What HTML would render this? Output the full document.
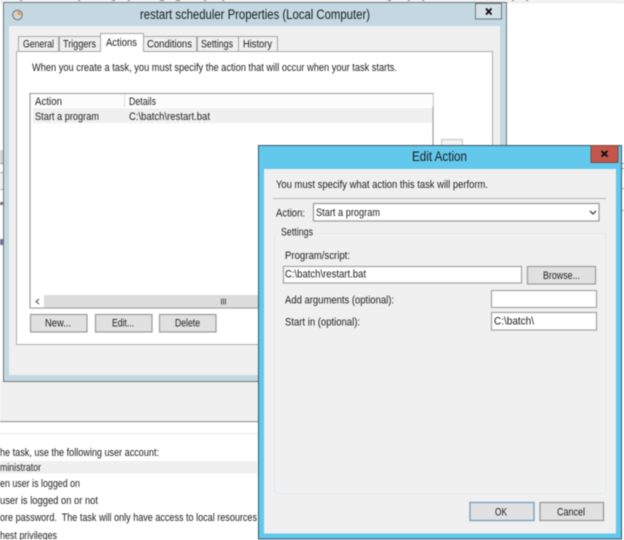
<!DOCTYPE html>
<html><head><meta charset="utf-8"><style>
html,body{margin:0;padding:0;width:624px;height:540px;overflow:hidden;background:#fff}
svg{display:block;filter:blur(.4px)}
text{font-family:"Liberation Sans",sans-serif;font-size:11px;fill:#1c1c1c}
</style></head><body>
<svg width="624" height="540" viewBox="0 0 624 540" xmlns="http://www.w3.org/2000/svg">
<rect width="624" height="540" fill="#fff"/>
<!-- top strip -->
<rect width="624" height="3.5" fill="#f0f0f0"/>
<g fill="#777"><rect x="20" y="0" width="2" height="1"/><rect x="78" y="0" width="2" height="1"/><rect x="112" y="0" width="3" height="1"/><rect x="128" y="0" width="2" height="1"/><rect x="160" y="0" width="4" height="1"/><rect x="176" y="0" width="4" height="1"/><rect x="204" y="0" width="2" height="1"/><rect x="222" y="0" width="2" height="1"/><rect x="388" y="0" width="3" height="1"/><rect x="408" y="0" width="2" height="1"/><rect x="422" y="0" width="2" height="1"/><rect x="512" y="0" width="2" height="1"/><rect x="526" y="0" width="2" height="1"/></g>
<!-- left fragments -->
<rect x="0" y="150" width="3" height="13" fill="#d4d4d4"/>
<rect x="0" y="163" width="3" height="1" fill="#999"/>
<rect x="0" y="172" width="3" height="1" fill="#aaa"/>
<rect x="0" y="173" width="3" height="16" fill="#f0f0f0"/>
<rect x="0" y="189" width="3" height="1" fill="#aaa"/>
<rect x="0" y="202" width="3" height="3" fill="#8a7068"/>
<rect x="0" y="239" width="3" height="6" fill="#70749a"/>
<!-- right fragments -->
<rect x="622" y="163" width="2" height="1" fill="#888"/><rect x="622" y="168" width="2" height="1" fill="#888"/><rect x="622" y="188" width="2" height="1" fill="#aaa"/><rect x="622" y="210" width="2" height="1" fill="#aaa"/>
<!-- lower background -->
<rect x="0" y="381" width="260" height="40" fill="#f0f0f0"/>
<rect x="0" y="421" width="260" height="1.2" fill="#9a9a9a"/>
<rect x="0" y="433" width="260" height="1" fill="#e2e8ea"/>
<rect x="0" y="461" width="257" height="12.5" fill="#f0f0f0"/>
<text x="0" y="456" textLength="159" lengthAdjust="spacingAndGlyphs">he task, use the following user account:</text>
<text x="0" y="471" textLength="41" lengthAdjust="spacingAndGlyphs">ministrator</text>
<text x="0" y="487" textLength="80" lengthAdjust="spacingAndGlyphs">en user is logged on</text>
<text x="0" y="504" textLength="98" lengthAdjust="spacingAndGlyphs">user is logged on or not</text>
<text x="0" y="521" textLength="257" lengthAdjust="spacingAndGlyphs" xml:space="preserve">ore password.  The task will only have access to local resources</text>
<text x="0" y="539" textLength="57" lengthAdjust="spacingAndGlyphs">hest privileges</text>

<!-- back window -->
<rect x="3.5" y="2.5" width="503" height="379" fill="#c3d8e0" stroke="#6d777c"/>
<rect x="9" y="26" width="491" height="349" fill="#f0f0f0"/>
<rect x="475.5" y="3.5" width="26" height="15.5" fill="#d3e1e6" stroke="#6d777c"/>
<path d="M486 8.5l5.5 6M491.5 8.5l-5.5 6" stroke="#111" stroke-width="1.9" fill="none"/>
<circle cx="17.5" cy="15" r="4.8" fill="#d2d2d2" stroke="#777" stroke-width="1"/>
<path d="M17.5 15V11.2A3.8 3.8 0 0 1 21.3 15Z" fill="#e0a050"/>
<text x="140" y="19" style="font-size:13.5px" textLength="230" lengthAdjust="spacingAndGlyphs">restart scheduler Properties (Local Computer)</text>
<!-- tabs panel -->
<rect x="16.5" y="51.5" width="476" height="293" fill="#fff" stroke="#aeaeae"/>
<g fill="#f0f0f0" stroke="#a8a8a8">
<rect x="18.5" y="36.5" width="40" height="15"/><rect x="59.5" y="36.5" width="41" height="15"/>
<rect x="143.5" y="36.5" width="53" height="15"/><rect x="197.5" y="36.5" width="41" height="15"/><rect x="238.5" y="36.5" width="39" height="15"/>
</g>
<rect x="100.5" y="33.5" width="43" height="18" fill="#fff" stroke="#a8a8a8"/>
<rect x="101" y="50" width="42" height="3" fill="#fff"/>
<text x="23" y="47.5" textLength="31" lengthAdjust="spacingAndGlyphs">General</text>
<text x="63" y="47.5" textLength="33" lengthAdjust="spacingAndGlyphs">Triggers</text>
<text x="106" y="46" textLength="31" lengthAdjust="spacingAndGlyphs">Actions</text>
<text x="147" y="47.5" textLength="45" lengthAdjust="spacingAndGlyphs">Conditions</text>
<text x="201" y="47.5" textLength="32" lengthAdjust="spacingAndGlyphs">Settings</text>
<text x="243" y="47.5" textLength="29" lengthAdjust="spacingAndGlyphs">History</text>
<text x="32" y="71" textLength="365" lengthAdjust="spacingAndGlyphs">When you create a task, you must specify the action that will occur when your task starts.</text>
<!-- list -->
<rect x="30" y="93.5" width="403" height="214.5" fill="#fff" stroke="#9e9e9e" stroke-width="1.2"/>
<rect x="31" y="94" width="402" height="13" fill="#fcfcfc"/>
<rect x="124" y="94" width="1" height="13" fill="#e0e0e0"/>
<rect x="33" y="108" width="399" height="15" fill="#f0f0f0"/>
<text x="35" y="105" textLength="27" lengthAdjust="spacingAndGlyphs">Action</text>
<text x="129" y="105" textLength="27" lengthAdjust="spacingAndGlyphs">Details</text>
<text x="35" y="120" textLength="64" lengthAdjust="spacingAndGlyphs">Start a program</text>
<text x="129" y="120" textLength="81" lengthAdjust="spacingAndGlyphs">C:\batch\restart.bat</text>
<!-- scrollbar -->
<rect x="31" y="295" width="402" height="12.5" fill="#dcdcdc"/>
<rect x="31" y="295" width="13" height="12.5" fill="#fff"/>
<path d="M39 299l-3 2.500 3 2.500" stroke="#444" fill="none" stroke-width="1"/>
<path d="M221.500 298.500v6M223.500 298.500v6M225.500 298.500v6" stroke="#555" stroke-width="1" fill="none"/>
<!-- behind button -->
<rect x="441.500" y="139.500" width="21" height="8" fill="#f2f2f2" stroke="#c4c4c4"/>
<!-- buttons -->
<g fill="#e1e1e1" stroke="#9a9a9a" stroke-width="1.2">
<rect x="30.500" y="314.500" width="56.500" height="17.500"/><rect x="95.500" y="314.500" width="56.500" height="17.500"/><rect x="159.500" y="314.500" width="56.500" height="17.500"/>
</g>
<text x="45" y="326.500" textLength="26" lengthAdjust="spacingAndGlyphs">New...</text>
<text x="112" y="326.500" textLength="22" lengthAdjust="spacingAndGlyphs">Edit...</text>
<text x="175" y="326.500" textLength="25" lengthAdjust="spacingAndGlyphs">Delete</text>

<!-- dialog -->
<rect x="258.500" y="145.500" width="363" height="393.500" fill="#62c8ec" stroke="#3a5566"/>
<rect x="264" y="169" width="352" height="364.500" fill="#f0f0f0"/>
<rect x="591" y="145.500" width="27" height="17" fill="#c4564c" stroke="#7d4a44"/>
<path d="M601.500 151l6 5.500M607.500 151l-6 5.500" stroke="#111" stroke-width="1.900" fill="none"/>
<text x="412" y="161" style="font-size:13.5px" textLength="55" lengthAdjust="spacingAndGlyphs">Edit Action</text>
<text x="276" y="188" textLength="212" lengthAdjust="spacingAndGlyphs">You must specify what action this task will perform.</text>
<rect x="273" y="198" width="333" height="1" fill="#b8b8b8"/>
<text x="276" y="216.500" textLength="29" lengthAdjust="spacingAndGlyphs">Action:</text>
<rect x="313.500" y="203.500" width="285.500" height="17.500" fill="#fff" stroke="#9a9a9a" stroke-width="1.200"/>
<text x="316" y="216" textLength="64" lengthAdjust="spacingAndGlyphs">Start a program</text>
<path d="M590 211l3 3 3-3" stroke="#444" stroke-width="1.300" fill="none"/>
<rect x="274.500" y="233.500" width="331.500" height="260" rx="2" fill="none" stroke="#e2e9ed"/>
<rect x="279" y="228" width="36" height="8" fill="#f0f0f0"/>
<text x="281" y="235.500" textLength="32" lengthAdjust="spacingAndGlyphs">Settings</text>
<text x="285" y="259" textLength="65" lengthAdjust="spacingAndGlyphs">Program/script:</text>
<rect x="283.500" y="266.500" width="238" height="16.500" fill="#fff" stroke="#a2a2a2" stroke-width="1.200"/>
<text x="285" y="277.500" textLength="81" lengthAdjust="spacingAndGlyphs">C:\batch\restart.bat</text>
<rect x="527.500" y="266.500" width="68" height="17.500" fill="#e1e1e1" stroke="#9a9a9a" stroke-width="1.200"/>
<text x="543" y="279" textLength="37" lengthAdjust="spacingAndGlyphs">Browse...</text>
<text x="285" y="303.500" textLength="109" lengthAdjust="spacingAndGlyphs">Add arguments (optional):</text>
<rect x="491.500" y="290.500" width="105" height="17" fill="#fff" stroke="#a2a2a2" stroke-width="1.200"/>
<text x="285" y="325.500" textLength="75" lengthAdjust="spacingAndGlyphs">Start in (optional):</text>
<rect x="491.500" y="312.500" width="105" height="17.500" fill="#fff" stroke="#a2a2a2" stroke-width="1.200"/>
<text x="494" y="324.500" textLength="40" lengthAdjust="spacingAndGlyphs">C:\batch\</text>
<rect x="470" y="502.500" width="64" height="18" fill="#e1e1e1" stroke="#6f9fc0" stroke-width="1.300"/>
<rect x="540" y="502.500" width="63.500" height="18" fill="#e1e1e1" stroke="#9a9a9a" stroke-width="1.300"/>
<text x="495" y="515.500" textLength="12" lengthAdjust="spacingAndGlyphs">OK</text>
<text x="557" y="515.500" textLength="28" lengthAdjust="spacingAndGlyphs">Cancel</text>
</svg>
</body></html>
